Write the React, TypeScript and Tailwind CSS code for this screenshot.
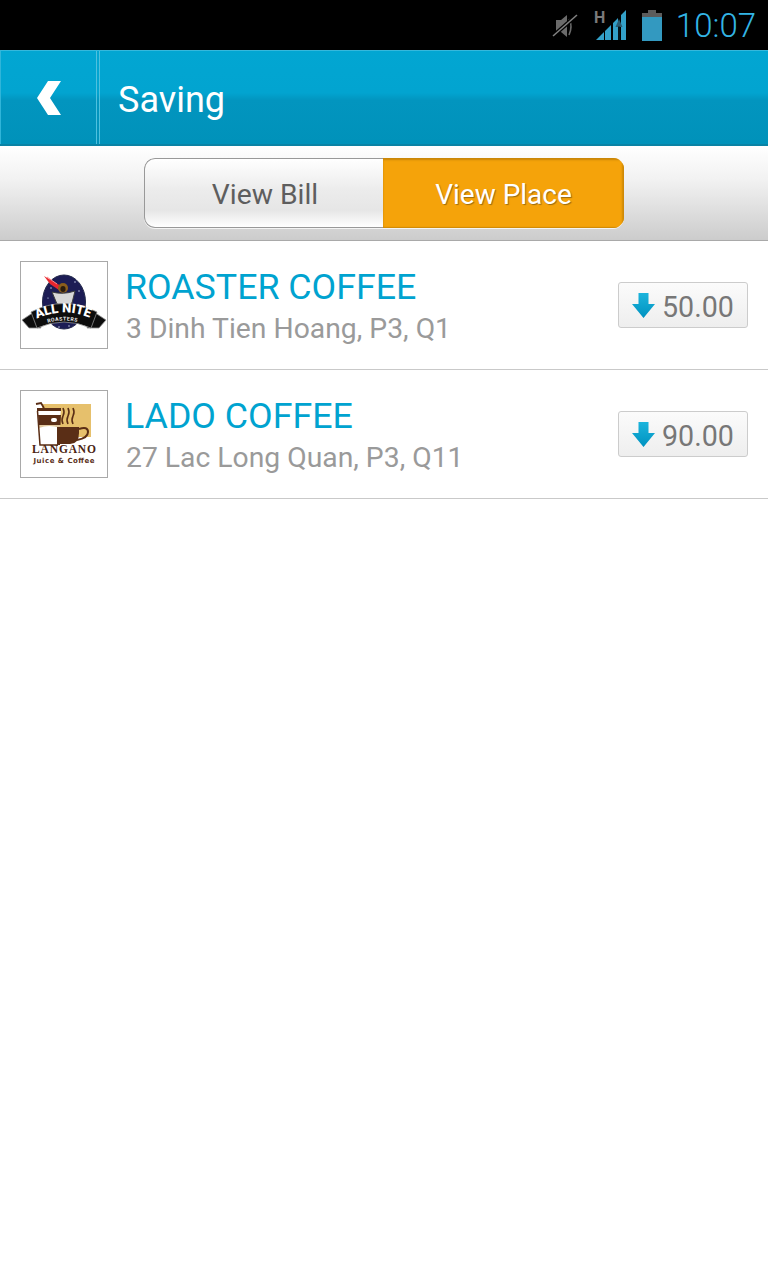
import React from "react";

type Place = {
  name: string;
  address: string;
  amount: string;
  logo: React.ReactNode;
};

function RoasterLogo() {
  return (
    <svg viewBox="0 0 86 86" className="h-[86px] w-[86px]">
      <defs>
        <filter id="soft1">
          <feGaussianBlur stdDeviation="0.4" />
        </filter>
        <path id="arcTop" d="M13 58 Q43 43 74 58" fill="none" />
        <path id="arcBottom" d="M20 63 Q43 54 67 63" fill="none" />
      </defs>
      <g filter="url(#soft1)">
        <ellipse cx="43" cy="40" rx="21.5" ry="27" fill="#1b1f55" stroke="#23264a" strokeWidth="1" />
        <circle cx="30" cy="26" r="0.7" fill="#dfe3ff" />
        <circle cx="54" cy="20" r="0.7" fill="#dfe3ff" />
        <circle cx="58" cy="29" r="0.7" fill="#dfe3ff" />
        <circle cx="27" cy="36" r="0.6" fill="#dfe3ff" />
        <circle cx="38" cy="65" r="0.7" fill="#dfe3ff" />
        <circle cx="48" cy="64" r="0.7" fill="#dfe3ff" />
        <path d="M23 14 L40 24 L38 28 L29 22 Z" fill="#e8282e" />
        <path d="M26 15 L36 22" stroke="#ff8a8a" strokeWidth="1" />
        <ellipse cx="42" cy="26" rx="5" ry="5" fill="#8a5d1c" />
        <ellipse cx="42" cy="27" rx="2.6" ry="3" fill="#2a1a10" />
        <path d="M31 30 Q42 33 54 29 L51 41 Q43 45 36 42 Z" fill="#d8d8d8" stroke="#3c3c3c" strokeWidth="1" />
        <path d="M1 58 L13 50 L17 55 L20 66 L8 66 Z" fill="#111" stroke="#8f8f8f" strokeWidth="0.8" />
        <path d="M85 58 L73 50 L69 55 L66 66 L78 66 Z" fill="#111" stroke="#8f8f8f" strokeWidth="0.8" />
        <path d="M10 50 Q43 33 76 50 L70 66 Q43 54 16 66 Z" fill="#0c0c0c" stroke="#8f8f8f" strokeWidth="0.8" />
      </g>
      <text fontFamily="Roboto, sans-serif" fontWeight="900" fontSize="13" fill="#fff">
        <textPath href="#arcTop" startOffset="3">ALL NITE</textPath>
      </text>
      <text fontFamily="Roboto, sans-serif" fontWeight="700" fontSize="5.2" letterSpacing="0.5" fill="#eeeeee">
        <textPath href="#arcBottom" startOffset="7">ROASTERS</textPath>
      </text>
    </svg>
  );
}

function LadoLogo() {
  return (
    <svg viewBox="0 0 86 86" className="h-[86px] w-[86px]">
      <defs>
        <filter id="soft2">
          <feGaussianBlur stdDeviation="0.3" />
        </filter>
      </defs>
      <g filter="url(#soft2)">
        <rect x="21" y="13" width="49" height="33" fill="#e6c06c" />
        <path d="M15 13 L20 12 L23 17" fill="none" stroke="#5a2d14" strokeWidth="1.8" />
        <path d="M16 17 H40 L37 54 H19 Z" fill="#fff" />
        <path d="M16 17 H40 V20 H16 Z" fill="#5a2d14" />
        <path d="M17 24 H40 L39.5 34 H18 Z" fill="#5a2d14" />
        <path d="M18 34 H39 L39 37 Q28 33 18 37 Z" fill="#e2c9a0" />
        <rect x="30" y="27" width="6" height="4" rx="2" fill="#fff" />
        <path d="M16.5 20 L19 54 H37" fill="none" stroke="#5a2d14" strokeWidth="1.5" />
        <path d="M36 36 H39 V54 H36 Z" fill="#5a2d14" />
        <path d="M36 36 H58 V42 Q58 53 49 53 H36 Z" fill="#5a2d14" />
        <path d="M58 38 Q67 35 67 41 Q67 47 56 49" fill="none" stroke="#5a2d14" strokeWidth="2" />
        <path d="M42 33 q-2 -4 0 -8 q2 -4 0 -8 M47 33 q-2 -4 0 -8 q2 -4 0 -8 M52 33 q-2 -4 0 -8 q2 -4 0 -8" fill="none" stroke="#5a2d14" strokeWidth="1.6" />
      </g>
      <text x="43" y="62" textAnchor="middle" fontFamily="'Liberation Serif', serif" fontWeight="700" fontSize="11.5" textLength="64" fill="#4a2412">
        LANGANO
      </text>
      <text x="43" y="72" textAnchor="middle" fontFamily="'DejaVu Sans', sans-serif" fontWeight="700" fontSize="7" textLength="61" fill="#5a3018">
        Juice & Coffee
      </text>
    </svg>
  );
}

function DownArrow() {
  return (
    <svg viewBox="0 0 23 25" className="h-[25px] w-[23px] shrink-0">
      <defs>
        <linearGradient id="arrowFill" x1="0" y1="0" x2="0" y2="1">
          <stop offset="0" stopColor="#1cb4dc" />
          <stop offset="1" stopColor="#0092c0" />
        </linearGradient>
      </defs>
      <path d="M6.5 0 H16.5 V11 H23 L11.5 25 L0 11 H6.5 Z" fill="url(#arrowFill)" />
    </svg>
  );
}

const places: Place[] = [
  {
    name: "ROASTER COFFEE",
    address: "3 Dinh Tien Hoang, P3, Q1",
    amount: "50.00",
    logo: <RoasterLogo />,
  },
  {
    name: "LADO COFFEE",
    address: "27 Lac Long Quan, P3, Q11",
    amount: "90.00",
    logo: <LadoLogo />,
  },
];

function StatusBar() {
  return (
    <div className="flex h-[50px] items-center justify-end bg-black pr-[12px]">
      {/* muted speaker */}
      <svg viewBox="0 0 28 28" className="mr-[14px] h-[28px] w-[28px]">
        <path d="M5 9 H10 L16 4 V26 L10 21 H5 Z" fill="#6a6a6a" />
        <path d="M18 8 Q22 15 18 24" fill="none" stroke="#6a6a6a" strokeWidth="1.5" />
        <path d="M2 25 L26 4" stroke="#000" strokeWidth="4" />
        <path d="M2 25 L26 4" stroke="#808080" strokeWidth="1.6" />
      </svg>
      {/* signal */}
      <svg viewBox="0 0 34 32" className="mr-[15px] h-[32px] w-[34px]">
        <text x="1" y="14" fontFamily="Roboto, sans-serif" fontWeight="700" fontSize="16" fill="#7a7a7a">
          H
        </text>
        <path d="M3 31 L11 23 V31 Z M12 31 V22 L18 16 V31 Z M20 31 V14 L25 9 V31 Z M28 31 V6 L33 1 V31 Z" fill="#33a0c8" />
        <path d="M26 10 L29.5 18 H22.5 Z" fill="#2a5a70" />
        <path d="M26 17 V31" stroke="#0d2630" strokeWidth="1" />
      </svg>
      {/* battery */}
      <svg viewBox="0 0 20 31" className="mr-[14px] h-[31px] w-[20px]">
        <path d="M6 0 H14 V3 H20 V7 H0 V3 H6 Z" fill="#5c5c5c" />
        <rect x="0" y="7" width="20" height="24" fill="#3399c0" />
      </svg>
      <span className="font-['Roboto',sans-serif] text-[33px] leading-none font-light text-[#33b5e5]">10:07</span>
    </div>
  );
}

function Header() {
  return (
    <div className="flex h-[96px] border-t border-b-2 border-t-[#35b8dc] border-b-[#0a83a5] bg-[linear-gradient(to_bottom,#02a6d2_0%,#02a4d0_45%,#0295bf_53%,#0092ba_100%)]">
      <div className="flex w-[97px] items-center justify-center border-r border-l border-r-[#4fc0de] border-l-[#30b5d9]">
        <svg viewBox="0 0 24 34" className="h-[34px] w-[24px]">
          <path d="M11 0 H24 L13 17 L24 34 H11 L0 17 Z" fill="#fff" />
        </svg>
      </div>
      <div className="ml-[2px] flex flex-1 items-center border-l border-l-[#4fc0de] pt-[4px] pl-[18px] font-['Roboto',sans-serif] text-[36px] text-white">
        Saving
      </div>
    </div>
  );
}

function SegmentBar() {
  return (
    <div className="flex h-[95px] items-start justify-center border-b border-b-[#a9a9a9] bg-[linear-gradient(to_bottom,#ffffff_0%,#f2f2f2_35%,#cccccc_100%)] pt-[12px] font-['Roboto',sans-serif] text-[28px]">
      <div className="flex h-[70px] w-[480px] overflow-hidden rounded-[11px] shadow-[0_1px_0_#f4f4f4]">
        <div className="flex w-[239px] items-center justify-center rounded-l-[11px] border border-r-0 border-[#999999] bg-[linear-gradient(to_bottom,#ffffff_0%,#ececec_45%,#e6e6e6_75%,#ffffff_100%)] pt-[4px] pl-[2px] text-[28.3px] text-[#5e5e5e]">
          View Bill
        </div>
        <div className="flex flex-1 items-center justify-center bg-[#f5a30a] pt-[4px] text-white shadow-[inset_0_2px_2px_#c98608,inset_-2px_0_2px_#d08b08,inset_0_-1px_1px_#d08b08] [text-shadow:1px_1px_1px_#9a6a10]">
          View Place
        </div>
      </div>
    </div>
  );
}

function PlaceRow({ place }: { place: Place }) {
  return (
    <div className="flex h-[129px] items-center border-b border-b-[#c9c9c9] px-[20px] font-['Roboto',sans-serif]">
      <div className="flex h-[88px] w-[88px] shrink-0 items-center justify-center overflow-hidden border border-[#a9a9a9] bg-white">
        {place.logo}
      </div>
      <div className="ml-[18px] flex-1 pt-[6px]">
        <p className="ml-[-1px] text-[35.75px] leading-[42px] text-[#00a3d0]">{place.name}</p>
        <p className="text-[28.3px] leading-[42px] text-[#9a9a9a]">{place.address}</p>
      </div>
      <div className="flex h-[46px] w-[130px] items-center gap-[7px] rounded-[3px] border border-[#cccccc] bg-[linear-gradient(to_bottom,#fbfbfb,#eeeeee)] pl-[13px] text-[28.6px] text-[#777777]">
        <DownArrow />
        <span className="pt-[4px]">{place.amount}</span>
      </div>
    </div>
  );
}

export default function App() {
  return (
    <div className="h-[1280px] w-[768px] overflow-hidden bg-white">
      <StatusBar />
      <Header />
      <SegmentBar />
      {places.map((place) => (
        <PlaceRow key={place.name} place={place} />
      ))}
    </div>
  );
}
